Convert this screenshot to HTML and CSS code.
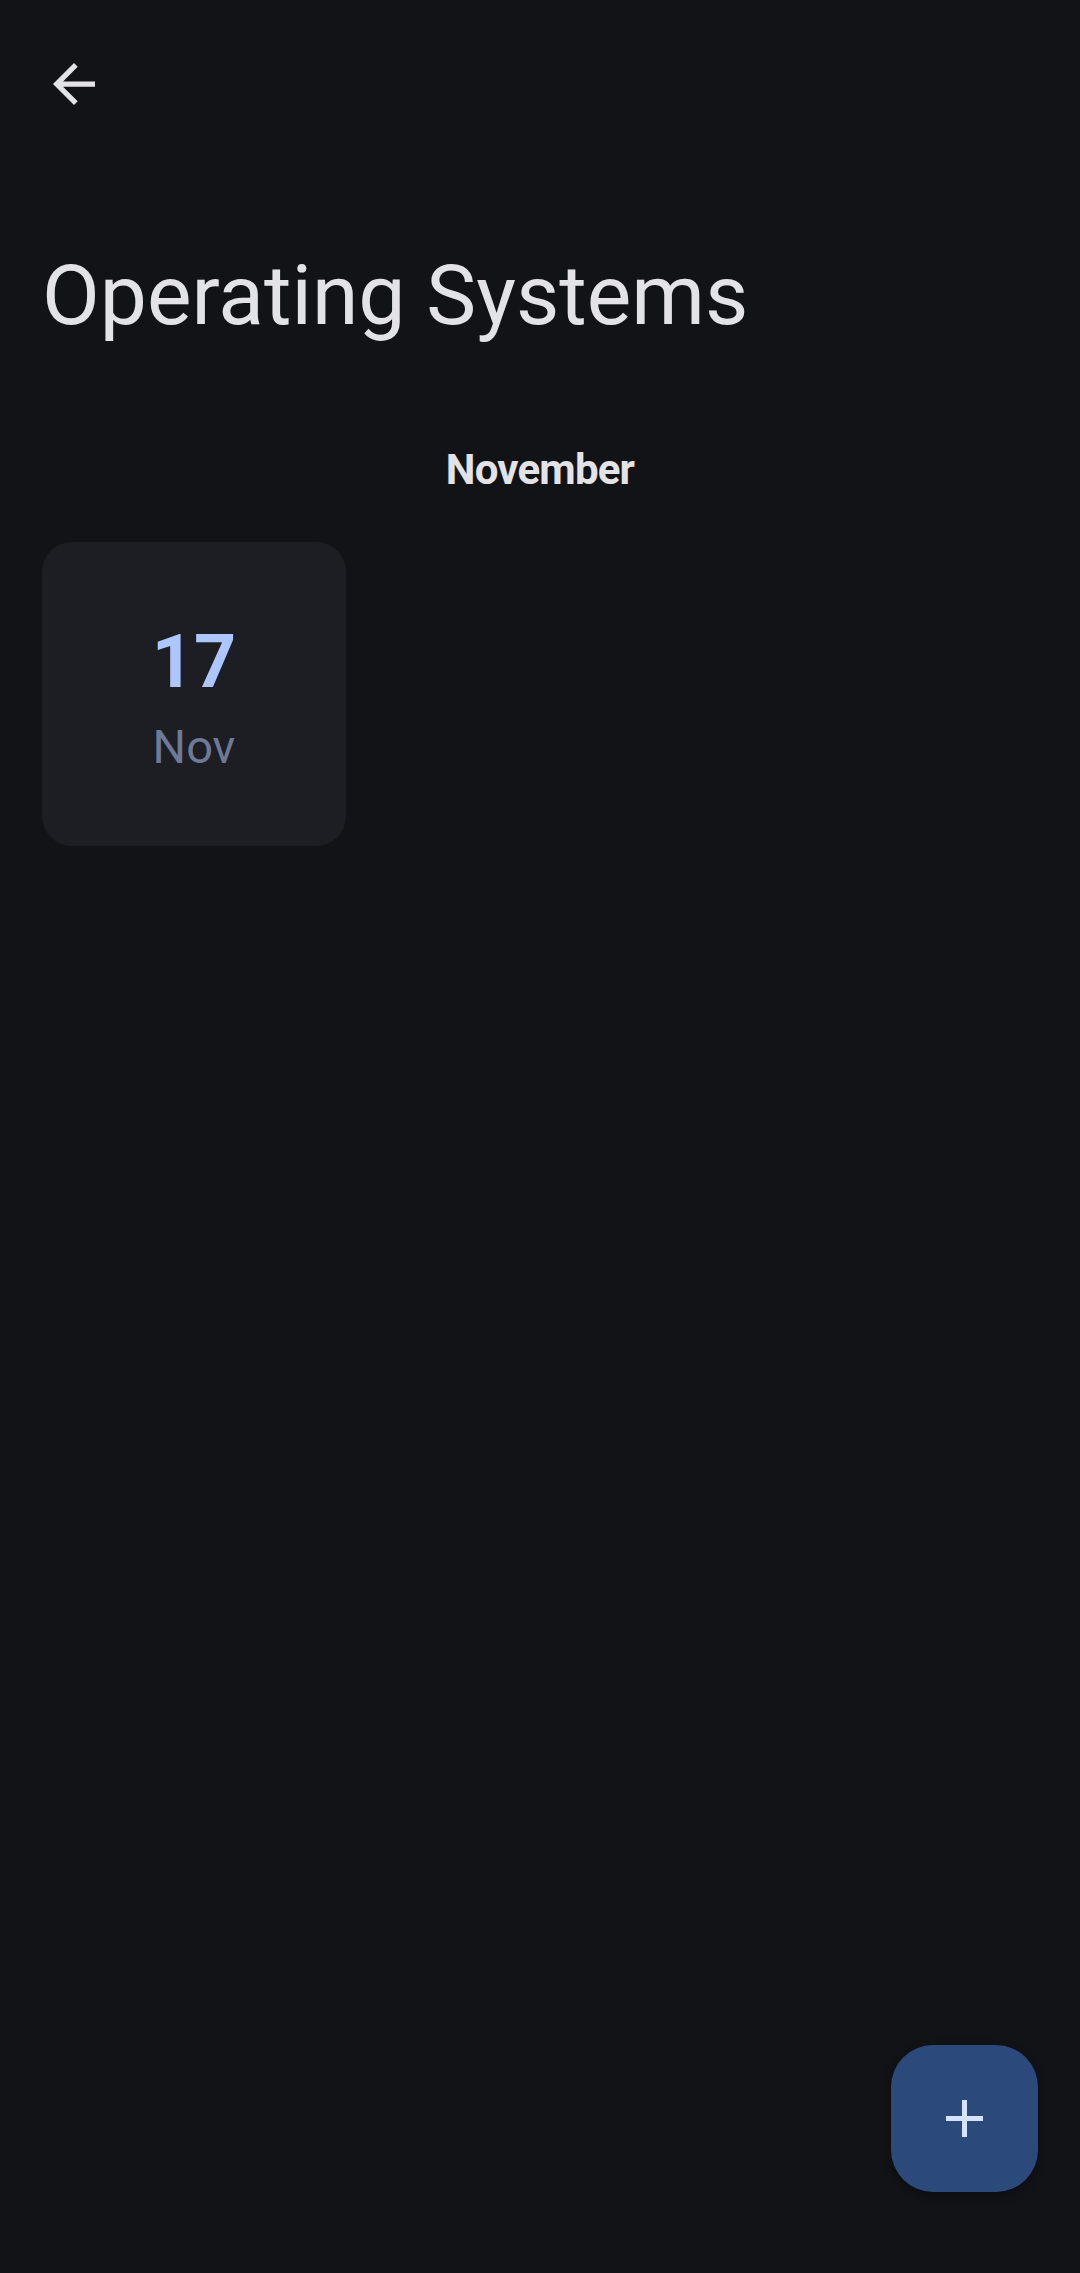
FILE: index.html
```html
<!DOCTYPE html>
<html lang="en">
<head>
<meta charset="utf-8">
<title>Operating Systems</title>
<link rel="stylesheet" href="styles.css">
</head>
<body>
<div class="app">
  <header class="topbar">
    <button class="back" aria-label="Back">
      <svg viewBox="4 4 16 16" width="42" height="42"><path d="M20 11H7.83l5.59-5.59L12 4l-8 8 8 8 1.41-1.41L7.83 13H20v-2z" fill="currentColor"/></svg>
    </button>
  </header>
  <h1 class="title">Operating Systems</h1>
  <section class="month">
    <h2 class="month-name">November</h2>
    <div class="grid">
      <div class="day-card">
        <span class="day">17</span>
        <span class="mon">Nov</span>
      </div>
    </div>
  </section>
  <button class="fab" aria-label="Add">
    <svg viewBox="0 0 37 37" width="37" height="37"><path d="M18.5 0v37M0 18.5h37" stroke="currentColor" stroke-width="5"/></svg>
  </button>
</div>
</body>
</html>
```
FILE: styles.css
```css
html, body {
  margin: 0;
  padding: 0;
  background: #121317;
}
body {
  font-family: Roboto, "Noto Sans", sans-serif;
  color: #e3e2e6;
}
.app {
  position: relative;
  width: 1080px;
  height: 2273px;
  background: #121317;
  overflow: hidden;
}
.topbar {
  padding: 63px 0 0 53px;
  height: 42px;
}
.back {
  display: block;
  padding: 0;
  margin: 0;
  border: 0;
  background: none;
  color: #e3e2e6;
  width: 42px;
  height: 42px;
}
.back svg { display: block; }
.title {
  margin: 149px 0 0 0;
  padding-left: 42px;
  font-size: 84px;
  line-height: 84px;
  font-weight: 400;
  color: #e3e2e6;
}
.month {
  padding: 0 42px;
}
.month-name {
  margin: 111px 0 0 0;
  text-align: center;
  font-size: 42px;
  line-height: 42px;
  font-weight: 700;
  letter-spacing: -0.8px;
  color: #e3e2e6;
}
.grid {
  display: grid;
  grid-template-columns: 304px;
  margin-top: 51px;
}
.day-card {
  width: 304px;
  height: 304px;
  box-sizing: border-box;
  padding-top: 12px;
  border-radius: 30px;
  background: #1d1e23;
  display: flex;
  flex-direction: column;
  align-items: center;
  justify-content: center;
}
.day {
  font-size: 73.5px;
  line-height: 74px;
  font-weight: 700;
  color: #adc6ff;
}
.mon {
  margin-top: 20px;
  font-size: 47px;
  line-height: 56px;
  font-weight: 400;
  color: #6e7a98;
}
.fab {
  position: absolute;
  left: 891px;
  top: 2045px;
  width: 147px;
  height: 147px;
  border: 0;
  padding: 0;
  border-radius: 42px;
  background: #2b4a7b;
  color: #d6e2ff;
  display: flex;
  align-items: center;
  justify-content: center;
  box-shadow: 0 3px 8px rgba(0,0,0,0.35);
}
.fab svg { display: block; }
```
